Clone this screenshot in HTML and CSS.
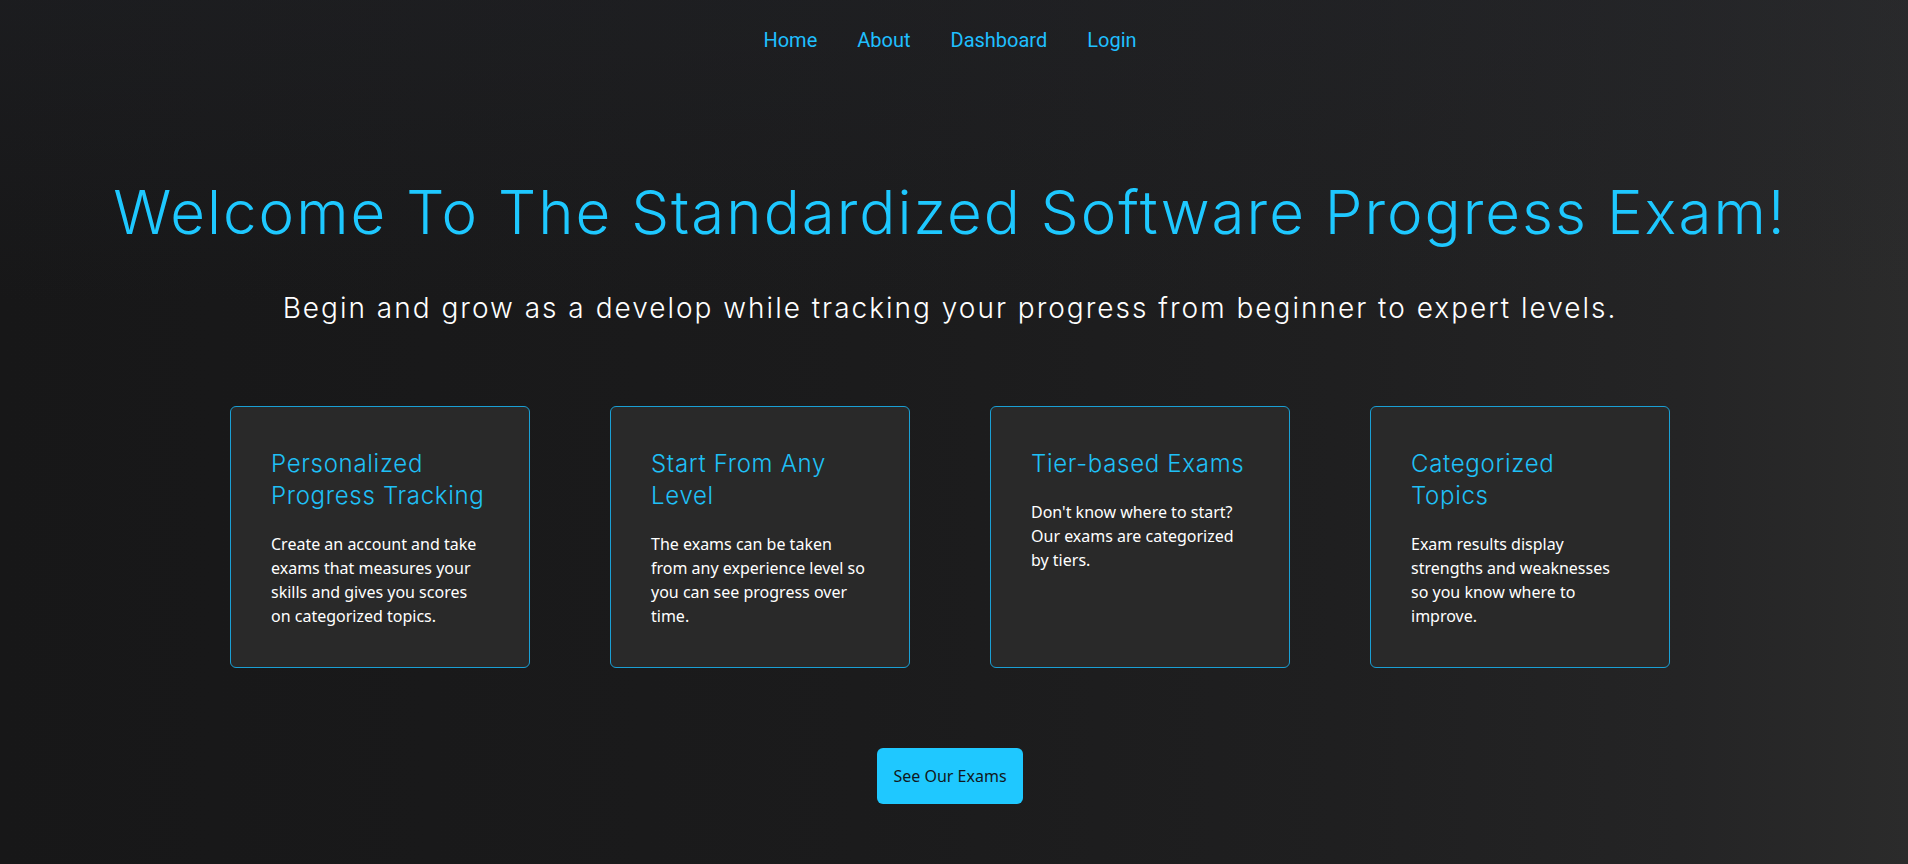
FILE: index.html
```html
<!DOCTYPE html>
<html lang="en">
<head>
<meta charset="utf-8">
<title>Standardized Software Progress Exam</title>
<link rel="stylesheet" href="styles.css">
</head>
<body>
<nav class="nav">
  <ul class="nav-list">
    <li><a class="nav-link" href="#">Home</a></li>
    <li><a class="nav-link" href="#">About</a></li>
    <li><a class="nav-link" href="#">Dashboard</a></li>
    <li><a class="nav-link" href="#">Login</a></li>
  </ul>
</nav>
<main class="hero">
  <h1 class="hero-title">Welcome To The Standardized Software Progress Exam!</h1>
  <p class="hero-sub">Begin and grow as a develop while tracking your progress from beginner to expert levels.</p>
  <section class="cards">
    <div class="card">
      <h3 class="card-title">Personalized Progress Tracking</h3>
      <p class="card-text">Create an account and take exams that measures your skills and gives you scores on categorized topics.</p>
    </div>
    <div class="card">
      <h3 class="card-title">Start From Any Level</h3>
      <p class="card-text">The exams can be taken from any experience level so you can see progress over time.</p>
    </div>
    <div class="card">
      <h3 class="card-title">Tier-based Exams</h3>
      <p class="card-text">Don't know where to start? Our exams are categorized by tiers.</p>
    </div>
    <div class="card">
      <h3 class="card-title">Categorized Topics</h3>
      <p class="card-text">Exam results display strengths and weaknesses so you know where to improve.</p>
    </div>
  </section>
  <div class="cta">
    <a class="cta-btn" href="#">See Our Exams</a>
  </div>
</main>
</body>
</html>
```

FILE: styles.css
```css
html, body {
  height: 100%;
}
body {
  margin: 0;
  padding: 0 8px 0 0;
  min-height: 864px;
  box-sizing: border-box;
  font-family: "Noto Sans", "Open Sans", sans-serif;
  color: #ffffff;
  background:
    linear-gradient(to bottom, rgba(36, 38, 44, 0.35) 0%, rgba(36, 38, 44, 0) 35%),
    linear-gradient(to right, #171718 0%, #1b1b1c 45%, #1f1f20 70%, #242425 88%, #2b2b2b 100%);
  overflow: hidden;
}

.nav {
  padding-top: 28px;
}
.nav-list {
  list-style: none;
  margin: 0;
  padding: 0;
  display: flex;
  justify-content: center;
  gap: 40px;
}
.nav-link {
  font-family: Roboto, "Noto Sans", sans-serif;
  font-size: 20px;
  line-height: 24px;
  color: #1fbfff;
  text-decoration: none;
  display: block;
}

.hero {
  display: flex;
  flex-direction: column;
  align-items: center;
}
.hero-title {
  margin: 125px 0 0;
  font-family: Inter, "Noto Sans", sans-serif;
  font-weight: 300;
  font-size: 60px;
  line-height: 70px;
  letter-spacing: 2px;
  color: #1ec8ff;
  white-space: nowrap;
}
.hero-sub {
  margin: 43px 0 0;
  font-family: Inter, "Noto Sans", sans-serif;
  font-weight: 300;
  font-size: 28px;
  line-height: 36px;
  letter-spacing: 2px;
  color: #ffffff;
  white-space: nowrap;
}

.cards {
  margin-top: 80px;
  display: flex;
  gap: 80px;
  align-items: stretch;
}
.card {
  width: 300px;
  box-sizing: border-box;
  padding: 41px 40px 39px;
  border: 1px solid #1a9fd4;
  border-radius: 6px;
  background: #292929;
}
.card-title {
  margin: 0 0 20px;
  font-family: Inter, "Noto Sans", sans-serif;
  font-weight: 300;
  font-size: 24px;
  line-height: 32px;
  letter-spacing: 0.7px;
  color: #1fc0f7;
}
.card-text {
  margin: 0;
  font-size: 16px;
  line-height: 24px;
  color: #ffffff;
}

.cta {
  margin-top: 80px;
}
.cta-btn {
  display: block;
  padding: 16px;
  border-radius: 6px;
  background: #1fc8ff;
  color: #111820;
  font-size: 16px;
  line-height: 24px;
  text-decoration: none;
}
```
